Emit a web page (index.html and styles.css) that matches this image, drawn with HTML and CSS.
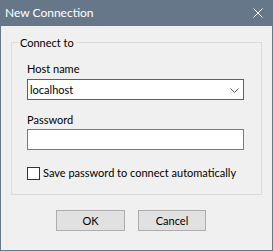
FILE: index.html
```html
<!DOCTYPE html>
<html lang="en">

<head>
    <meta charset="UTF-8">
    <title>New Connection</title>
    <link rel="stylesheet" href="styles.css">
</head>

<body>
    <div class="window">
        <!-- Title bar -->
        <div class="titlebar">
            <span class="title">New Connection</span>
            <svg class="close" width="10" height="10" viewBox="0 0 10 10">
                <path d="M0.5 0.5 L9.5 9.5 M9.5 0.5 L0.5 9.5" stroke="#ffffff" stroke-width="1" fill="none" />
            </svg>
        </div>

        <div class="content">
            <div class="group">
                <div class="legend">Connect to</div>

                <div class="label host-label">Host name</div>
                <div class="combo">
                    <span class="combo-value">localhost</span>
                    <svg class="chevron" width="9" height="5" viewBox="0 0 9 5">
                        <path d="M0.5 0.5 L4.5 4.5 L8.5 0.5" stroke="#5a5a5a" stroke-width="1" fill="none" />
                    </svg>
                </div>

                <div class="label pass-label">Password</div>
                <div class="textbox"></div>

                <div class="check-row">
                    <span class="checkbox"></span>
                    <span class="check-label">Save password to connect automatically</span>
                </div>
            </div>

            <div class="buttons">
                <div class="button ok">OK</div>
                <div class="button cancel">Cancel</div>
            </div>
        </div>
    </div>
</body>

</html>
```
FILE: styles.css
```css
body {
    margin: 0;
    padding: 0;
    font-family: Lato, "Noto Sans", sans-serif;
    font-size: 11px;
    color: #000000;
}

.window {
    width: 273px;
    height: 251px;
    box-sizing: border-box;
    border: 1px solid #66778a;
    border-top: none;
    background-color: #f0f0f0;
    display: flex;
    flex-direction: column;
}

/* Title bar */
.titlebar {
    height: 26px;
    margin: 0 -1px;
    background-color: #66778a;
    color: #ffffff;
    display: flex;
    align-items: center;
    justify-content: space-between;
    padding: 0 10px 0 5px;
}

.title {
    font-size: 12px;
    line-height: 16px;
}

.close {
    display: block;
    margin-top: 0;
}

.content {
    flex: 1;
    display: flex;
    flex-direction: column;
}

/* Group box */
.group {
    margin: 16px 10px 0;
    height: 153px;
    box-sizing: border-box;
    border: 1px solid #dcdcdc;
    padding: 0 16px 0 15px;
}

.legend {
    width: fit-content;
    margin: -8px 0 0 -9px;
    padding: 0 2px;
    line-height: 16px;
    background-color: #f0f0f0;
}

.label {
    line-height: 16px;
}

.host-label {
    margin-top: 10px;
    margin-bottom: 2px;
}

.pass-label {
    margin-top: 12px;
    margin-bottom: 1px;
}

.combo,
.textbox {
    width: 217px;
    height: 21px;
    box-sizing: border-box;
    background-color: #ffffff;
}

.combo {
    border: 1px solid #0078d7;
    display: flex;
    align-items: center;
    justify-content: space-between;
    padding: 0 4px 0 2px;
}

.combo-value {
    line-height: 16px;
}

.chevron {
    display: block;
    margin-top: 1px;
}

.textbox {
    border: 1px solid #7a7a7a;
}

.check-row {
    margin-top: 15px;
    display: flex;
    align-items: center;
    gap: 3px;
}

.checkbox {
    width: 13px;
    height: 13px;
    box-sizing: border-box;
    border: 1px solid #333333;
    background-color: #ffffff;
}

.check-label {
    line-height: 16px;
}

/* Buttons */
.buttons {
    display: flex;
    gap: 13px;
    margin-top: 15px;
    padding-left: 55px;
}

.button {
    height: 21px;
    box-sizing: border-box;
    border: 1px solid #adadad;
    background-color: #e1e1e1;
    display: flex;
    align-items: center;
    justify-content: center;
    line-height: 16px;
}

.ok {
    width: 69px;
}

.cancel {
    width: 68px;
}
```
